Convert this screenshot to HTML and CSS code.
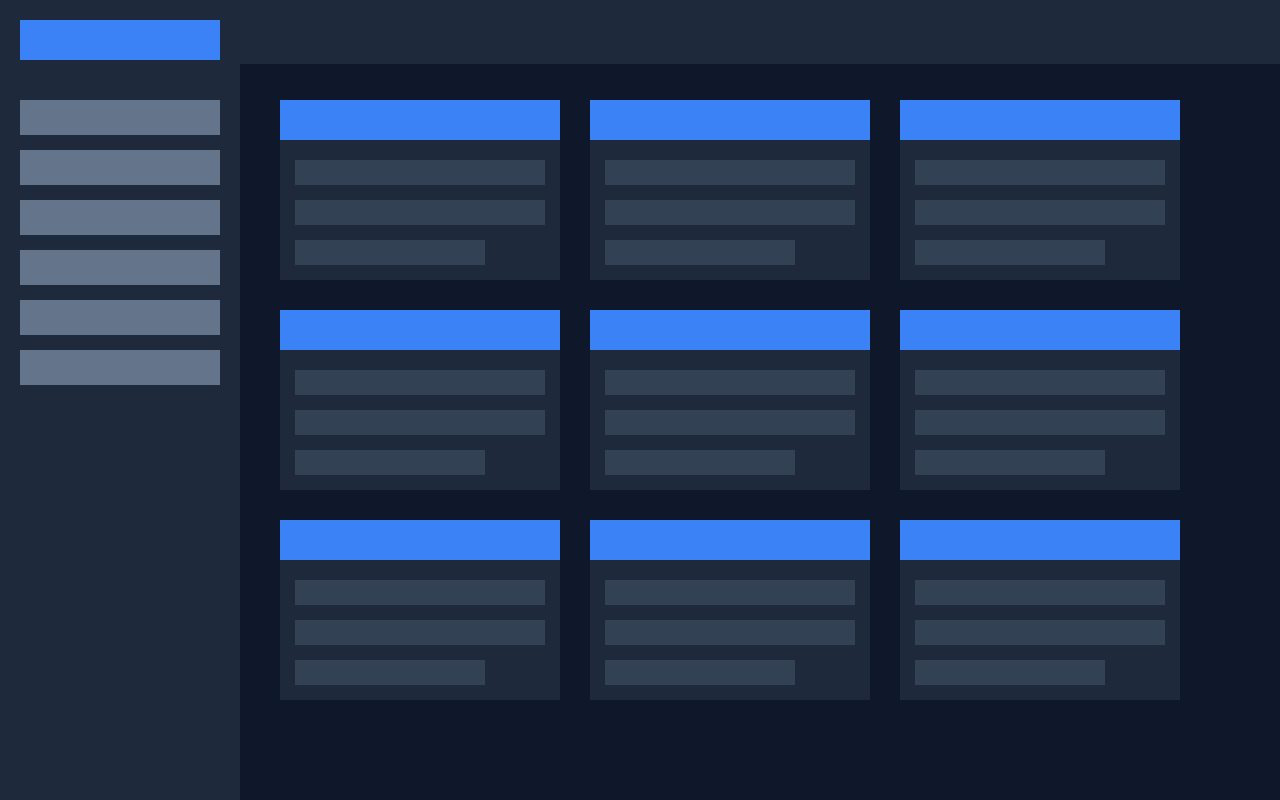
FILE: index.html
```html
<!DOCTYPE html>
<html lang="en">
<head>
  <meta charset="UTF-8">
  <title>Dashboard</title>
  <link rel="stylesheet" href="styles.css">
</head>
<body>

  <!-- Sidebar -->
  <aside class="sidebar">
    <div class="logo"></div>
    <nav class="nav">
      <div class="nav-item"></div>
      <div class="nav-item"></div>
      <div class="nav-item"></div>
      <div class="nav-item"></div>
      <div class="nav-item"></div>
      <div class="nav-item"></div>
    </nav>
  </aside>

  <div class="page">
    <header class="topbar"></header>

    <main class="content">
      <div class="grid">
        <div class="card"><div class="card-head"></div><div class="card-body"><div class="line"></div><div class="line"></div><div class="line short"></div></div></div>
        <div class="card"><div class="card-head"></div><div class="card-body"><div class="line"></div><div class="line"></div><div class="line short"></div></div></div>
        <div class="card"><div class="card-head"></div><div class="card-body"><div class="line"></div><div class="line"></div><div class="line short"></div></div></div>
        <div class="card"><div class="card-head"></div><div class="card-body"><div class="line"></div><div class="line"></div><div class="line short"></div></div></div>
        <div class="card"><div class="card-head"></div><div class="card-body"><div class="line"></div><div class="line"></div><div class="line short"></div></div></div>
        <div class="card"><div class="card-head"></div><div class="card-body"><div class="line"></div><div class="line"></div><div class="line short"></div></div></div>
        <div class="card"><div class="card-head"></div><div class="card-body"><div class="line"></div><div class="line"></div><div class="line short"></div></div></div>
        <div class="card"><div class="card-head"></div><div class="card-body"><div class="line"></div><div class="line"></div><div class="line short"></div></div></div>
        <div class="card"><div class="card-head"></div><div class="card-body"><div class="line"></div><div class="line"></div><div class="line short"></div></div></div>
      </div>
    </main>
  </div>

</body>
</html>
```

FILE: styles.css
```css
body {
  font-family: "Liberation Sans", Arial, sans-serif;
  background-color: #0f172a;
  margin: 0;
  padding: 0;
  display: flex;
  min-height: 100vh;
}

.sidebar {
  width: 240px;
  flex-shrink: 0;
  box-sizing: border-box;
  padding: 20px;
  background-color: #1e293b;
  min-height: 100vh;
}

.logo {
  height: 40px;
  background-color: #3b82f6;
  margin-bottom: 40px;
}

.nav {
  display: flex;
  flex-direction: column;
  gap: 15px;
}

.nav-item {
  height: 35px;
  background-color: #64748b;
}

.page {
  flex: 1;
  display: flex;
  flex-direction: column;
}

.topbar {
  height: 64px;
  background-color: #1e293b;
}

.content {
  padding: 36px 40px;
}

.grid {
  display: grid;
  grid-template-columns: 280px 280px 280px;
  gap: 30px;
}

.card {
  background-color: #1e293b;
}

.card-head {
  height: 40px;
  background-color: #3b82f6;
}

.card-body {
  display: flex;
  flex-direction: column;
  gap: 15px;
  padding: 20px 15px 15px;
}

.line {
  height: 25px;
  background-color: #334155;
}

.line.short {
  width: 190px;
}
```
